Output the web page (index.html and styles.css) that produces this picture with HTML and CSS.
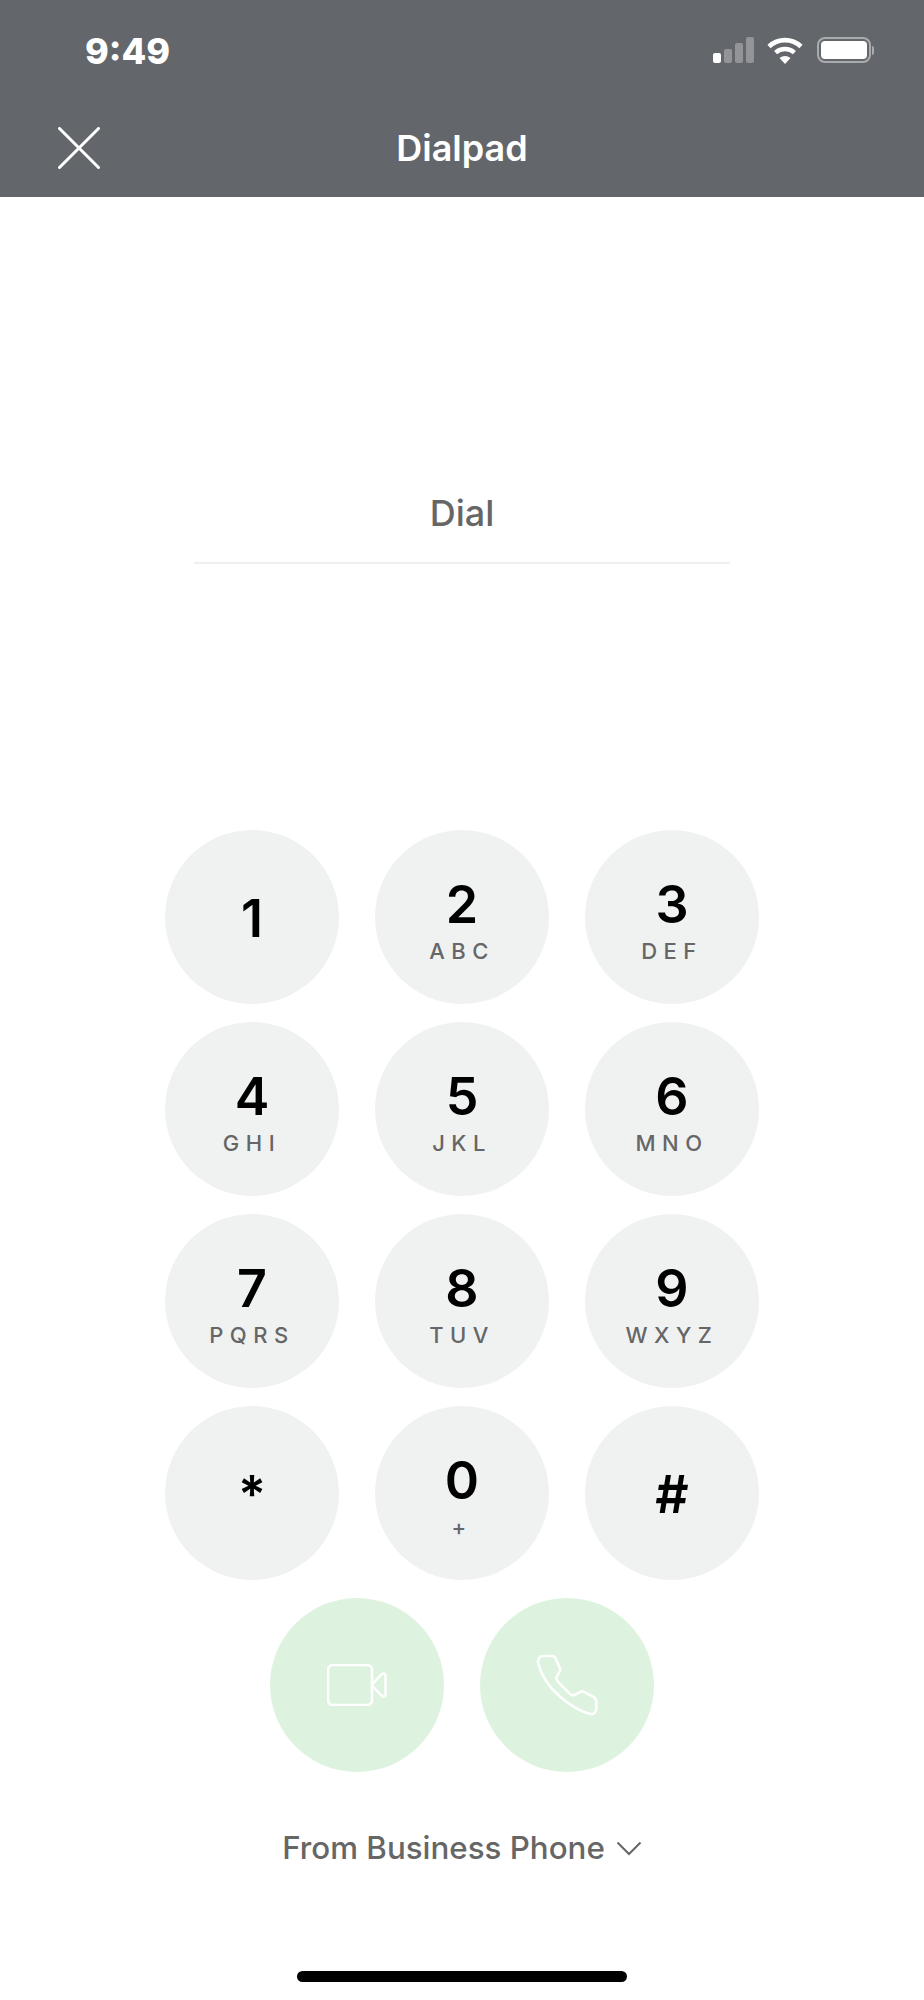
FILE: index.html
```html
<!DOCTYPE html>
<html lang="en">
	<head>
		<meta charset="utf-8">
		<title>Dialpad</title>
		<link rel="stylesheet" href="styles.css">
	</head>
	<body>
		<header id="top_bar">
			<div class="status">
				<span class="time">9:49</span>
				<div class="status_icons">
					<div class="signal">
						<i class="bar bar1 on"></i>
						<i class="bar bar2"></i>
						<i class="bar bar3"></i>
						<i class="bar bar4"></i>
					</div>
					<svg class="wifi" width="36" height="27" viewBox="0 0 36 27">
						<path d="M2 9.500C11 1 25 1 34 9.500" fill="none" stroke="#fff" stroke-width="4.600"/>
						<path d="M8.600 15.600C14 10.800 22 10.800 27.400 15.600" fill="none" stroke="#fff" stroke-width="4.600"/>
						<path d="M12.500 21 18 27 23.500 21C20 18.200 16 18.200 12.500 21Z" fill="#fff"/>
					</svg>
					<div class="battery"><div class="battery_fill"></div></div>
					<div class="battery_nub"></div>
				</div>
			</div>
			<div class="nav">
				<svg class="close" width="42" height="42" viewBox="0 0 42 42">
					<path d="M1.500 1.500 40.500 40.500M40.500 1.500 1.500 40.500" fill="none" stroke="#fff" stroke-width="3" stroke-linecap="round"/>
				</svg>
				<h1>Dialpad</h1>
			</div>
		</header>

		<div class="dial_field">Dial</div>

		<div class="keypad">
			<button class="key"><span class="digit">1</span></button>
			<button class="key"><span class="digit">2</span><span class="letters">ABC</span></button>
			<button class="key"><span class="digit">3</span><span class="letters">DEF</span></button>
			<button class="key"><span class="digit">4</span><span class="letters">GHI</span></button>
			<button class="key"><span class="digit">5</span><span class="letters">JKL</span></button>
			<button class="key"><span class="digit">6</span><span class="letters">MNO</span></button>
			<button class="key"><span class="digit">7</span><span class="letters">PQRS</span></button>
			<button class="key"><span class="digit">8</span><span class="letters">TUV</span></button>
			<button class="key"><span class="digit">9</span><span class="letters">WXYZ</span></button>
			<button class="key"><span class="digit">*</span></button>
			<button class="key"><span class="digit">0</span><span class="letters">+</span></button>
			<button class="key"><span class="digit">#</span></button>
		</div>

		<div class="call_row">
			<button class="call">
				<svg width="60" height="42" viewBox="0 0 60 42">
					<rect x="1" y="1" width="44" height="40" rx="5" fill="none" stroke="#fff" stroke-width="2.500"/>
					<path d="M45 20.500 55 10C56.500 8.800 58.500 9.500 58.500 11.500V30.500C58.500 32.500 56.500 33.200 55 32L45 21.500" fill="none" stroke="#fff" stroke-width="2.500"/>
				</svg>
			</button>
			<button class="call">
				<svg width="62" height="62" viewBox="0 0 62 62">
					<path d="M7 2H16C18 2 19.200 3 19.700 4.700L24.300 15.300C24.800 17 20.300 22.500 20.300 24.300C20.300 26 22 28.700 35.300 41C37 42 38.700 41 46.300 37L57 42.700C59.500 44 60.300 46 60.300 47.700V54.300C60.300 58 57.500 60.300 55.300 60.300C38 56 8 36 2 8C2 5 4 2 7 2Z" fill="none" stroke="#fff" stroke-width="2.500" stroke-linejoin="round"/>
				</svg>
			</button>
		</div>

		<div class="source">
			<span>From Business Phone</span>
			<svg width="26" height="15" viewBox="0 0 26 15">
				<path d="M1.500 1.500 13 13 24.500 1.500" fill="none" stroke="#666" stroke-width="2"/>
			</svg>
		</div>

		<div class="home_bar"></div>
	</body>
</html>
```

FILE: styles.css
```css
body { background-color: #fff; color: #000; font-family: Inter, "Liberation Sans", sans-serif; height: 2000px; margin: 0; overflow: hidden; }

button { border: 0; display: block; font-family: inherit; padding: 0; }

i { display: block; }

h1 { color: #fff; font-size: 36px; font-weight: 600; line-height: 44px; margin: 0; }

#top_bar { background-color: #63666a; height: 197px; }

.status { align-items: center; display: flex; height: 100px; justify-content: space-between; padding: 0 50px 0 85px; }

.time { color: #fff; font-size: 36px; font-weight: 800; margin-top: 2px; }

.status_icons { align-items: center; display: flex; }

.signal { align-items: flex-end; display: flex; gap: 3px; height: 26px; margin-right: 13px; }

.bar { background-color: rgba(255, 255, 255, 0.3); border-radius: 2px; width: 8px; }

.bar.on { background-color: #fff; }

.bar1 { height: 10px; }

.bar2 { height: 14px; }

.bar3 { height: 20px; }

.bar4 { height: 26px; }

.wifi { margin-right: 14px; }

.battery { border: 2px solid rgba(255, 255, 255, 0.45); border-radius: 8px; box-sizing: border-box; height: 26px; padding: 2px; width: 54px; }

.battery_fill { background-color: #fff; border-radius: 4px; height: 100%; }

.battery_nub { background-color: rgba(255, 255, 255, 0.45); border-radius: 0 3px 3px 0; height: 9px; margin-left: 1px; width: 2px; }

.nav { align-items: center; display: flex; height: 95px; justify-content: center; position: relative; }

.close { left: 58px; position: absolute; top: 27px; }

.dial_field { border-bottom: 2px solid #eef0f0; color: #666; font-size: 36px; font-weight: 500; height: 71px; line-height: 44px; margin: 294px auto 0; text-align: center; width: 536px; }

.keypad { display: grid; gap: 18px 36px; grid-template-columns: repeat(3, 174px); justify-content: center; margin-top: 266px; }

.key { align-items: center; background-color: #f0f2f2; border-radius: 50%; display: flex; flex-direction: column; height: 174px; justify-content: flex-start; padding-top: 43px; width: 174px; }

.digit { font-size: 52px; font-weight: 600; line-height: 64px; }

.key .digit:only-child { margin-top: 14px; }

.letters { color: #666; font-size: 22px; font-weight: 500; letter-spacing: 6.500px; line-height: 24px; margin-top: 2px; }

.call_row { display: flex; gap: 36px; justify-content: center; margin-top: 18px; }

.call { align-items: center; background-color: #def3df; border-radius: 50%; display: flex; height: 174px; justify-content: center; width: 174px; }

.source { align-items: center; color: #666; display: flex; font-size: 31.300px; font-weight: 500; gap: 11px; justify-content: center; line-height: 38px; margin-top: 57px; }

.home_bar { background-color: #000; border-radius: 6px; height: 11px; margin: 104px auto 0; width: 330px; }
```
